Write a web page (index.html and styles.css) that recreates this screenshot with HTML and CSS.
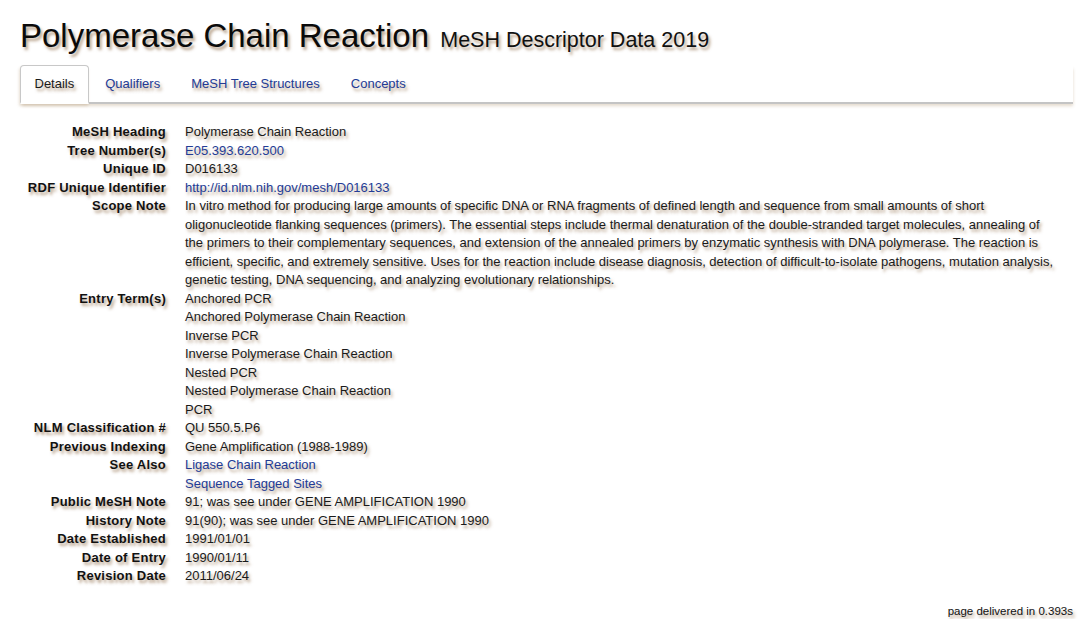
FILE: index.html
```html
<!DOCTYPE html>
<html lang="en">
<head>
<meta charset="utf-8">
<title>Polymerase Chain Reaction MeSH Descriptor Data 2019</title>
<link rel="stylesheet" href="styles.css">
</head>
<body>
<div class="page">
  <h1 class="title">Polymerase Chain Reaction <small class="subtitle">MeSH Descriptor Data 2019</small></h1>
  <ul class="tabs">
    <li class="tab active"><a href="#">Details</a></li>
    <li class="tab"><a href="#">Qualifiers</a></li>
    <li class="tab"><a href="#">MeSH Tree Structures</a></li>
    <li class="tab"><a href="#">Concepts</a></li>
  </ul>
  <dl class="details">
    <dt>MeSH Heading</dt><dd>Polymerase Chain Reaction</dd>
    <dt>Tree Number(s)</dt><dd><a href="#">E05.393.620.500</a></dd>
    <dt>Unique ID</dt><dd>D016133</dd>
    <dt>RDF Unique Identifier</dt><dd><a href="#">http://id.nlm.nih.gov/mesh/D016133</a></dd>
    <dt>Scope Note</dt><dd class="scope">In vitro method for producing large amounts of specific DNA or RNA fragments of defined length and sequence from small amounts of short<br>oligonucleotide flanking sequences (primers). The essential steps include thermal denaturation of the double-stranded target molecules, annealing of<br>the primers to their complementary sequences, and extension of the annealed primers by enzymatic synthesis with DNA polymerase. The reaction is<br>efficient, specific, and extremely sensitive. Uses for the reaction include disease diagnosis, detection of difficult-to-isolate pathogens, mutation analysis,<br>genetic testing, DNA sequencing, and analyzing evolutionary relationships.</dd>
    <dt>Entry Term(s)</dt><dd>Anchored PCR<br>Anchored Polymerase Chain Reaction<br>Inverse PCR<br>Inverse Polymerase Chain Reaction<br>Nested PCR<br>Nested Polymerase Chain Reaction<br>PCR</dd>
    <dt>NLM Classification #</dt><dd>QU 550.5.P6</dd>
    <dt>Previous Indexing</dt><dd>Gene Amplification (1988-1989)</dd>
    <dt>See Also</dt><dd><a href="#">Ligase Chain Reaction</a><br><a href="#">Sequence Tagged Sites</a></dd>
    <dt>Public MeSH Note</dt><dd>91; was see under GENE AMPLIFICATION 1990</dd>
    <dt>History Note</dt><dd>91(90); was see under GENE AMPLIFICATION 1990</dd>
    <dt>Date Established</dt><dd>1991/01/01</dd>
    <dt>Date of Entry</dt><dd>1990/01/11</dd>
    <dt>Revision Date</dt><dd>2011/06/24</dd>
  </dl>
  <footer class="footer">page delivered in 0.393s</footer>
</div>
</body>
</html>
```

FILE: styles.css
```css
html, body {
  margin: 0;
  padding: 0;
  background: #fff;
}

body {
  font-family: "Liberation Sans", Arial, sans-serif;
  font-size: 13px;
  color: #1a1a1a;
  text-shadow: 2px 3px 3px rgba(115, 72, 25, 0.5);
}

.page {
  padding: 18px 18px 0 20px;
}

.title {
  margin: 0;
  font-size: 33px;
  font-weight: normal;
  line-height: 36px;
  color: #0a0a0a;
}

.subtitle {
  font-size: 21.5px;
  margin-left: 2px;
  color: #111;
}

.tabs {
  list-style: none;
  margin: 7px 0 0 0;
  padding: 0;
  display: flex;
  border-bottom: 2px solid #c4c4c4;
  box-shadow: 1px 3px 3px -1px rgba(150, 110, 60, 0.25);
}

.tab {
  margin-right: 2px;
  margin-bottom: -2px;
}

.tab a {
  display: block;
  padding: 9px 13.5px 10px;
  line-height: 17px;
  color: #233b95;
  text-decoration: none;
  border: 1px solid transparent;
  border-radius: 4px 4px 0 0;
}

.tab.active a {
  color: #1a1a1a;
  background: #fff;
  border-color: #c8c8c8;
  border-bottom-color: #fff;
  border-bottom-width: 2px;
  box-shadow: -1px 2px 3px rgba(150, 110, 60, 0.2);
}

.details {
  display: grid;
  grid-template-columns: 146px 1fr;
  column-gap: 19px;
  margin: 19px 0 0 0;
  line-height: 18.5px;
}

.details dt {
  font-weight: bold;
  text-align: right;
  letter-spacing: 0.25px;
  color: #111;
}

.details dd {
  margin: 0;
}

.details .scope {
  white-space: nowrap;
}

.details a {
  color: #233b95;
  text-decoration: none;
}

.footer {
  text-align: right;
  font-size: 11.5px;
  line-height: 16px;
  margin-top: 17px;
  color: #111;
}
```
